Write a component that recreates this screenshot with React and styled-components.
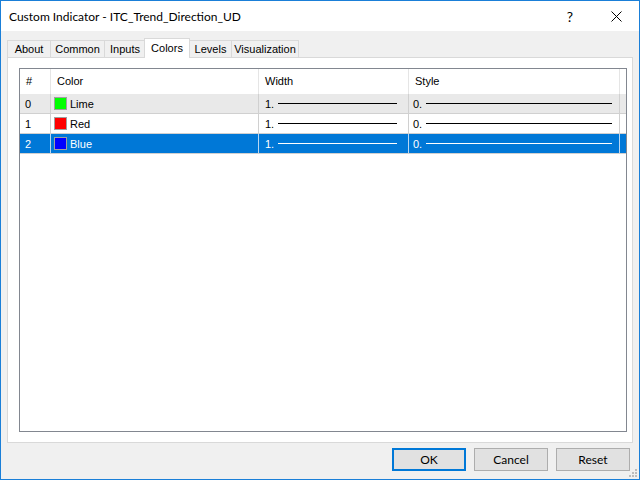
import styled, { createGlobalStyle } from 'styled-components';

const GlobalStyle = createGlobalStyle`
  html, body { margin: 0; padding: 0; background: #ffffff; }
  body { font-family: "Liberation Sans", Arial, sans-serif; font-size: 11px; color: #000; }
  * { box-sizing: border-box; }
`;

const tabs = [
  { label: 'About', w: 44 },
  { label: 'Common', w: 55 },
  { label: 'Inputs', w: 42 },
  { label: 'Colors', w: 46, active: true },
  { label: 'Levels', w: 43 },
  { label: 'Visualization', w: 68 },
];

const columns = [
  { label: '#', w: 31 },
  { label: 'Color', w: 208 },
  { label: 'Width', w: 150 },
  { label: 'Style', w: 211 },
];

const rows = [
  { idx: 0, name: 'Lime', swatch: '#00ff00', tone: 'hover' },
  { idx: 1, name: 'Red', swatch: '#ff0000', tone: 'plain' },
  { idx: 2, name: 'Blue', swatch: '#0000ff', tone: 'selected' },
];

const App = () => {
  return (
    <>
      <GlobalStyle />
      <Window>
        <TitleBar>
          <Title>Custom Indicator - ITC_Trend_Direction_UD</Title>
          <CaptionButton>?</CaptionButton>
          <CaptionButton>
            <svg width="11" height="11" viewBox="0 0 11 11">
              <path d="M0.5 0.5 L10.5 10.5 M10.5 0.5 L0.5 10.5" stroke="#000" strokeWidth="1" />
            </svg>
          </CaptionButton>
        </TitleBar>
        <Client>
          <TabStrip>
            {tabs.map((t) => (
              <Tab key={t.label} $w={t.w} $active={t.active}>
                {t.label}
              </Tab>
            ))}
          </TabStrip>
          <Panel>
            <ListView>
              <HeaderRow>
                {columns.map((c) => (
                  <HeaderCell key={c.label} $w={c.w}>
                    {c.label}
                  </HeaderCell>
                ))}
                <HeaderCell $w={0} />
              </HeaderRow>
              {rows.map((r) => (
                <Row key={r.idx} $tone={r.tone}>
                  <Cell $tone={r.tone}>{r.idx}</Cell>
                  <Cell $tone={r.tone} $pad={3}>
                    <Swatch $color={r.swatch} />
                    {r.name}
                  </Cell>
                  <Cell $tone={r.tone} $pad={6}>
                    1.
                    <LineSample $tone={r.tone} $end={11} />
                  </Cell>
                  <Cell $tone={r.tone} $pad={4}>
                    0.
                    <LineSample $tone={r.tone} $end={7} />
                  </Cell>
                  <Cell $tone={r.tone} $last />
                </Row>
              ))}
            </ListView>
          </Panel>
          <Footer>
            <Button $default>OK</Button>
            <Button>Cancel</Button>
            <Button>Reset</Button>
          </Footer>
          <SizeGrip>
            <svg width="10" height="10" viewBox="0 0 10 10">
              {[
                [7, 1], [7, 4], [4, 4], [7, 7], [4, 7], [1, 7],
              ].map(([x, y]) => (
                <rect key={`${x}-${y}`} x={x} y={y} width="2" height="2" fill="#bcbcbc" />
              ))}
            </svg>
          </SizeGrip>
        </Client>
      </Window>
    </>
  );
};

const Window = styled.div`
  width: 640px;
  height: 480px;
  border: 1px solid #1a7fd8;
  display: flex;
  flex-direction: column;
  background: #f0f0f0;
`;
const TitleBar = styled.div`
  height: 30px;
  background: #ffffff;
  display: flex;
  align-items: center;
  padding-left: 8px;
`;
const Title = styled.div`
  flex: 1;
  font-family: Lato, "Liberation Sans", sans-serif;
  font-size: 12px;
  color: #000;
  margin-top: 1px;
`;
const CaptionButton = styled.div`
  width: 46px;
  height: 30px;
  display: flex;
  align-items: center;
  justify-content: center;
  font-family: Lato, "Liberation Sans", sans-serif;
  font-size: 14px;
  color: #000;
`;
const Client = styled.div`
  flex: 1;
  position: relative;
  display: flex;
  flex-direction: column;
  padding: 7px 6px 8px 6px;
`;
const TabStrip = styled.div`
  height: 19px;
  display: flex;
  align-items: flex-end;
`;
const Tab = styled.div`
  width: ${(p) => p.$w}px;
  height: ${(p) => (p.$active ? 20 : 17)}px;
  margin-left: ${(p) => (p.$active ? -2 : -1)}px;
  margin-bottom: ${(p) => (p.$active ? -1 : 0)}px;
  &:first-child { margin-left: 0; }
  border: 1px solid #d9d9d9;
  border-bottom: none;
  background: ${(p) => (p.$active ? '#ffffff' : '#f0f0f0')};
  position: relative;
  z-index: ${(p) => (p.$active ? 2 : 1)};
  display: flex;
  align-items: center;
  justify-content: center;
  padding-bottom: ${(p) => (p.$active ? 2 : 0)}px;
  white-space: nowrap;
`;
const Panel = styled.div`
  flex: 1;
  background: #ffffff;
  border: 1px solid #d9d9d9;
  padding: 10px 9px 10px 11px;
  display: flex;
`;
const ListView = styled.div`
  flex: 1;
  border: 1px solid #828790;
  background: #ffffff;
`;
const HeaderRow = styled.div`
  display: flex;
  height: 25px;
`;
const HeaderCell = styled.div`
  width: ${(p) => p.$w}px;
  flex: ${(p) => (p.$w ? '0 0 auto' : '1')};
  border-right: ${(p) => (p.$w ? '1px solid #e5e5e5' : 'none')};
  display: flex;
  align-items: center;
  padding-left: 6px;
  padding-bottom: 1px;
`;
const tones = {
  hover: { bg: '#e9e9e9', fg: '#000', line: '#000' },
  plain: { bg: '#ffffff', fg: '#000', line: '#000' },
  selected: { bg: '#0078d7', fg: '#fff', line: '#fff' },
};
const Row = styled.div`
  display: flex;
  height: 20px;
  border-bottom: 1px solid #d0d0d0;
  background: ${(p) => tones[p.$tone].bg};
  color: ${(p) => tones[p.$tone].fg};
`;
const Cell = styled.div`
  display: flex;
  align-items: center;
  flex: ${(p) => (p.$last ? '1' : '0 0 auto')};
  padding-left: ${(p) => p.$pad ?? 5}px;
  border-right: ${(p) => (p.$last ? 'none' : `1px solid ${p.$tone === 'selected' ? '#b9d7f2' : '#d0d0d0'}`)};
  &:nth-child(1) { width: 31px; }
  &:nth-child(2) { width: 208px; }
  &:nth-child(3) { width: 150px; }
  &:nth-child(4) { width: 211px; }
`;
const Swatch = styled.span`
  width: 13px;
  height: 13px;
  border: 1px solid #a0a0a0;
  background: ${(p) => p.$color};
  margin-right: 3px;
`;
const LineSample = styled.span`
  flex: 1;
  height: 1px;
  background: ${(p) => tones[p.$tone].line};
  margin-left: 4px;
  margin-right: ${(p) => p.$end}px;
`;
const Footer = styled.div`
  display: flex;
  justify-content: flex-end;
  gap: 8px;
  margin-top: 5px;
  padding-right: 3px;
`;
const Button = styled.div`
  width: 74px;
  height: 23px;
  background: #e1e1e1;
  border: ${(p) => (p.$default ? '2px solid #0078d7' : '1px solid #adadad')};
  display: flex;
  align-items: center;
  justify-content: center;
  font-family: Lato, "Liberation Sans", sans-serif;
  font-size: 12px;
`;
const SizeGrip = styled.div`
  position: absolute;
  right: 1px;
  bottom: 1px;
  width: 10px;
  height: 10px;
  line-height: 0;
`;

export default App;
